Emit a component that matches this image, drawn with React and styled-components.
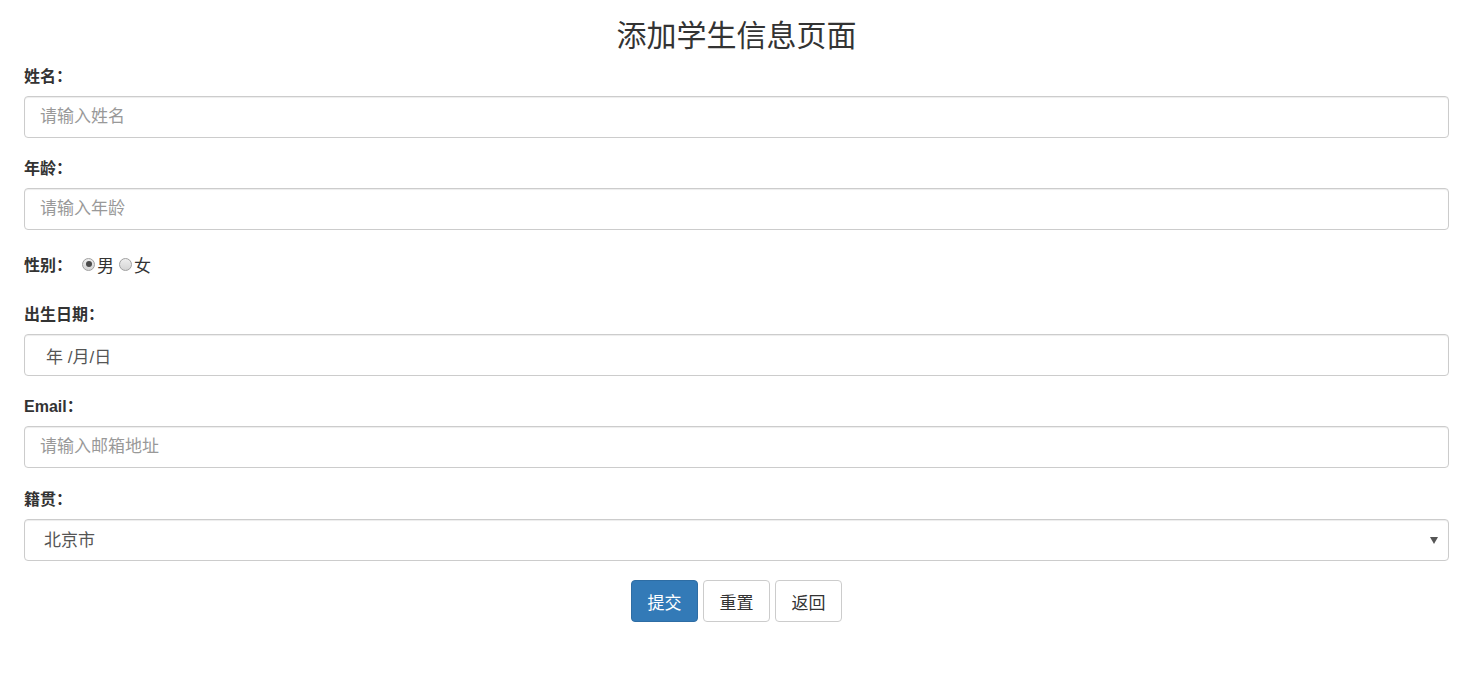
import React from "react";
import styled, { createGlobalStyle } from "styled-components";

const Global = createGlobalStyle`
  * { box-sizing: border-box; }
  body {
    margin: 0;
    background: #fff;
    color: #333;
    font-family: "Liberation Sans", "Noto Sans CJK SC", sans-serif;
    font-size: 14px;
  }
`;

const Page = styled.div`
  padding: 0 29px 0 24px;
`;

const Title = styled.h3`
  margin: 19px 0 15px;
  text-align: center;
  font-size: 30px;
  line-height: 33px;
  font-weight: 400;
  color: #333;
`;

const Form = styled.form`
  display: flex;
  flex-direction: column;
`;

const Group = styled.div`
  margin-bottom: ${(p) => p.$gap ?? 21}px;
`;

const Label = styled.label`
  display: block;
  font-weight: 700;
  font-size: 16px;
  line-height: 20px;
  margin-bottom: 9px;
  color: #333;
`;

const Input = styled.input`
  display: block;
  width: 100%;
  height: 42px;
  padding: 0 16px 0 ${(p) => p.$pl ?? 15}px;
  font-family: inherit;
  font-size: 17px;
  color: #555;
  background: #fff;
  border: 1px solid #ccc;
  border-radius: 4px;
  box-shadow: inset 0 1px 1px rgba(0, 0, 0, 0.075);
  outline: none;
  &::placeholder {
    color: #999;
  }
`;

const RadioRow = styled.div`
  display: flex;
  align-items: center;
  height: 26px;
  margin-bottom: 28px;
`;

const InlineLabel = styled.span`
  font-weight: 700;
  font-size: 16px;
  margin-right: 10px;
`;

const RadioOption = styled.label`
  display: inline-flex;
  align-items: center;
  font-size: 17px;
  color: #333;
  margin-right: 5px;
`;

const Radio = styled.input`
  appearance: none;
  width: 13px;
  height: 13px;
  margin: 0 2px 0 0;
  border-radius: 50%;
  border: 1px solid #a0a0a0;
  background: linear-gradient(#eeeeee, #d4d4d4);
  position: relative;
  &:checked::after {
    content: "";
    position: absolute;
    left: 2.5px;
    top: 2.5px;
    width: 6px;
    height: 6px;
    border-radius: 50%;
    background: #4a4a4a;
  }
`;

const SelectWrap = styled.div`
  position: relative;
  &::after {
    content: "";
    position: absolute;
    right: 11px;
    top: 18px;
    border-left: 4px solid transparent;
    border-right: 4px solid transparent;
    border-top: 7px solid #555;
    pointer-events: none;
  }
`;

const Select = styled.select`
  display: block;
  width: 100%;
  height: 42px;
  padding: 0 30px 0 19px;
  appearance: none;
  font-family: inherit;
  font-size: 17px;
  color: #555;
  background: #fff;
  border: 1px solid #ccc;
  border-radius: 4px;
  box-shadow: inset 0 1px 1px rgba(0, 0, 0, 0.075);
  outline: none;
`;

const ButtonRow = styled.div`
  display: flex;
  justify-content: center;
  gap: 5px;
`;

const Button = styled.button`
  width: 67px;
  height: 42px;
  padding: 0;
  font-family: inherit;
  font-size: 17px;
  border-radius: 4px;
  cursor: pointer;
  border: 1px solid ${(p) => (p.$primary ? "#2e6da4" : "#ccc")};
  background: ${(p) => (p.$primary ? "#337ab7" : "#fff")};
  color: ${(p) => (p.$primary ? "#fff" : "#333")};
`;

export default function App() {
  return (
    <>
      <Global />
      <Page>
        <Title>添加学生信息页面</Title>
        <Form onSubmit={(e) => e.preventDefault()}>
          <Group>
            <Label>姓名：</Label>
            <Input placeholder="请输入姓名" />
          </Group>
          <Group>
            <Label>年龄：</Label>
            <Input placeholder="请输入年龄" />
          </Group>
          <RadioRow>
            <InlineLabel>性别：</InlineLabel>
            <RadioOption>
              <Radio type="radio" name="sex" defaultChecked />男
            </RadioOption>
            <RadioOption>
              <Radio type="radio" name="sex" />女
            </RadioOption>
          </RadioRow>
          <Group>
            <Label>出生日期：</Label>
            <Input $pl={21} defaultValue="年 /月/日" readOnly />
          </Group>
          <Group $gap={22}>
            <Label>Email：</Label>
            <Input placeholder="请输入邮箱地址" />
          </Group>
          <Group $gap={19}>
            <Label>籍贯：</Label>
            <SelectWrap>
              <Select defaultValue="北京市">
                <option>北京市</option>
                <option>上海市</option>
                <option>广州市</option>
              </Select>
            </SelectWrap>
          </Group>
          <ButtonRow>
            <Button $primary type="submit">提交</Button>
            <Button type="reset">重置</Button>
            <Button type="button">返回</Button>
          </ButtonRow>
        </Form>
      </Page>
    </>
  );
}
